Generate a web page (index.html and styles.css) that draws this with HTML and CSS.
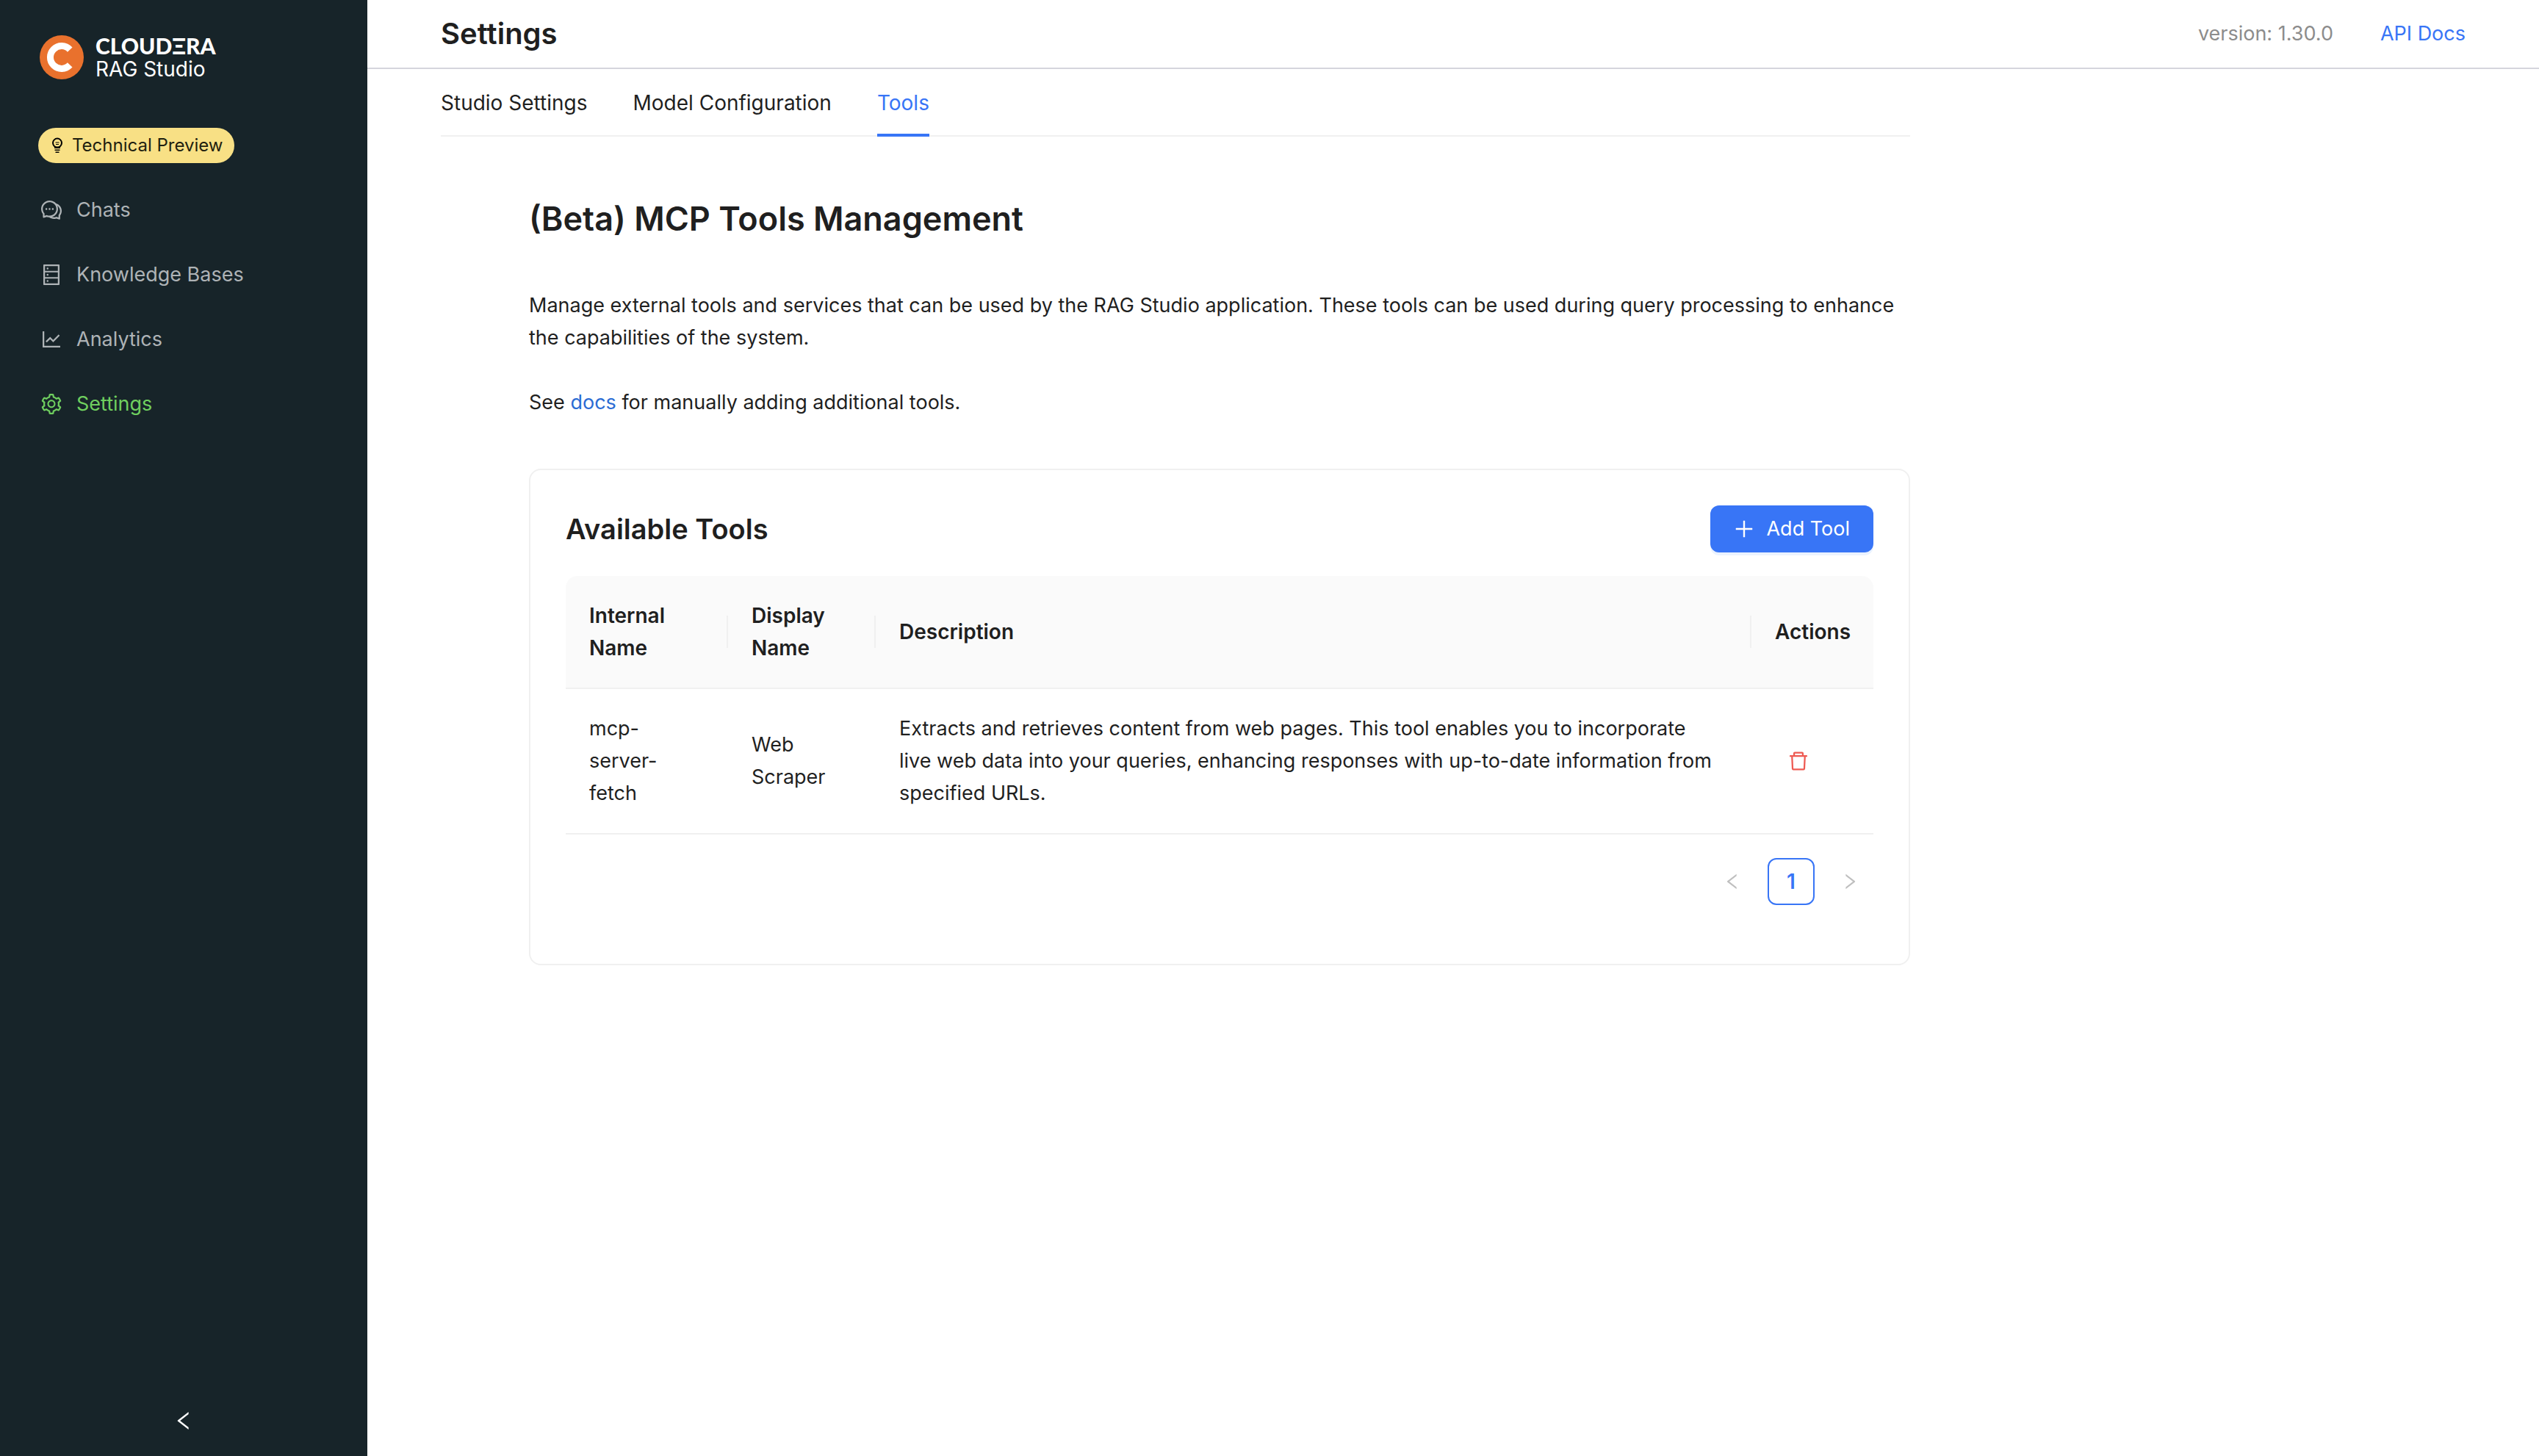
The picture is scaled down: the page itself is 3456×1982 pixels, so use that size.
FILE: index.html
```html
<!DOCTYPE html>
<html lang="en">
<head>
<meta charset="utf-8">
<meta name="viewport" content="width=device-width, initial-scale=1">
<title>RAG Studio - Settings</title>
<link rel="stylesheet" href="styles.css">
</head>
<body>
<div class="app">
  <aside class="sidebar">
    <a class="brand" href="#" aria-label="Cloudera RAG Studio">
      <svg class="brand-mark" viewBox="0 0 60 60" aria-hidden="true">
        <circle cx="30" cy="30" r="30" fill="#e9712d"/>
        <path d="M41.2 19.6A15.4 15.4 0 1 0 41.2 40.4" fill="none" stroke="#fff" stroke-width="9"/>
      </svg>
      <span class="brand-text">
        <span class="brand-name">CLOUDΞRA</span>
        <span class="brand-product">RAG Studio</span>
      </span>
    </a>
    <span class="tag">
      <svg class="tag-icon" viewBox="0 0 24 24" aria-hidden="true">
        <circle cx="12" cy="8.600" r="6" fill="none" stroke="currentColor" stroke-width="2"/>
        <path d="M9.500 8h5M10 10.500h4" fill="none" stroke="currentColor" stroke-width="1"/>
        <path d="M8 14h8v2H8zM8.500 17.500h7v1.600h-7zM9.500 20.500h5v1.500h-5z" fill="currentColor"/>
      </svg>
      Technical Preview
    </span>
    <nav class="menu" aria-label="Main">
      <a class="menu-item" href="#">
        <svg class="icon" viewBox="64 64 896 896" aria-hidden="true"><path d="M573 421c-23.1 0-41 17.900-41 40s17.900 40 41 40c21.100 0 39-17.900 39-40s-17.900-40-39-40zm-280 0c-23.100 0-41 17.900-41 40s17.900 40 41 40c21.100 0 39-17.900 39-40s-17.900-40-39-40z"/><path d="M894 345a343.920 343.920 0 00-189-130v.1c-17.100-19-36.400-36.500-58-52.100-163.700-119-393.500-82.700-513 81-96.300 133-92.200 311.900 6 439l.8 132.600c0 3.200.5 6.400 1.500 9.400a31.950 31.950 0 0040.100 20.900L309 806c33.500 11.900 68.100 18.700 102.500 20.600l-.5.4c89.100 64.900 205.900 84.400 313 49l127.100 41.400c3.200 1 6.500 1.600 9.900 1.600 17.700 0 32-14.300 32-32V753c88.100-119.600 90.400-284.900 1-408zM323 735l-12-5-99 31-1-104-8-9c-84.600-103.200-90.200-251.900-11-361 96.400-132.200 281.200-161.400 413-66 132.200 96.100 161.500 280.600 66 412-80.100 109.900-223.500 150.500-348 102zm505-17l-8 10 1 104-98-33-12 5c-56 20.800-115.700 22.500-171 7l-.2-.1A367.310 367.310 0 00729 676c76.400-105.300 88.800-237.600 44.400-350.400l.6.4c23 16.500 44.100 37.100 62 62 72.600 99.600 68.500 235.200-8 330z"/><path d="M433 421c-23.100 0-41 17.900-41 40s17.900 40 41 40c21.100 0 39-17.900 39-40s-17.900-40-39-40z"/></svg>
        Chats
      </a>
      <a class="menu-item" href="#">
        <svg class="icon" viewBox="64 64 896 896" aria-hidden="true"><path d="M832 64H192c-17.700 0-32 14.300-32 32v832c0 17.700 14.300 32 32 32h640c17.700 0 32-14.300 32-32V96c0-17.700-14.300-32-32-32zm-600 72h560v208H232V136zm560 480H232V408h560v208zm0 272H232V680h560v208zM304 240a40 40 0 1080 0 40 40 0 10-80 0zm0 272a40 40 0 1080 0 40 40 0 10-80 0zm0 272a40 40 0 1080 0 40 40 0 10-80 0z"/></svg>
        Knowledge Bases
      </a>
      <a class="menu-item" href="#">
        <svg class="icon" viewBox="64 64 896 896" aria-hidden="true"><path d="M888 792H200V168c0-4.400-3.600-8-8-8h-56c-4.400 0-8 3.600-8 8v688c0 4.400 3.600 8 8 8h752c4.400 0 8-3.600 8-8v-56c0-4.400-3.600-8-8-8zM305.800 637.700c3.100 3.100 8.100 3.100 11.300 0l138.300-137.600L583 628.500c3.100 3.100 8.200 3.100 11.300 0l275.400-275.300c3.100-3.100 3.100-8.200 0-11.300l-39.600-39.600a8.030 8.030 0 00-11.300 0l-230 229.900L461.400 404a8.030 8.030 0 00-11.300 0L266.300 586.700a8.030 8.030 0 000 11.300l39.500 39.700z"/></svg>
        Analytics
      </a>
      <a class="menu-item menu-item-active" href="#" aria-current="page">
        <svg class="icon" viewBox="64 64 896 896" aria-hidden="true"><path d="M924.800 625.700l-65.500-56c3.100-19 4.700-38.400 4.700-57.800s-1.600-38.800-4.700-57.800l65.500-56a32.030 32.030 0 009.300-35.200l-.9-2.600a443.740 443.740 0 00-79.700-137.900l-1.800-2.100a32.120 32.120 0 00-35.100-9.500l-81.300 28.900c-30-24.600-63.500-44-99.700-57.600l-15.700-85a32.050 32.050 0 00-25.800-25.700l-2.700-.5c-52.100-9.400-106.900-9.400-159 0l-2.700.5a32.050 32.050 0 00-25.800 25.700l-15.800 85.400a351.860 351.860 0 00-99 57.400l-81.900-29.100a32 32 0 00-35.100 9.500l-1.800 2.100a446.020 446.020 0 00-79.700 137.900l-.9 2.600c-4.500 12.500-.8 26.500 9.300 35.200l66.300 56.600c-3.100 18.800-4.600 38-4.600 57.100 0 19.200 1.500 38.400 4.600 57.100L99 625.500a32.030 32.030 0 00-9.300 35.200l.9 2.600c18.100 50.400 44.900 96.900 79.700 137.900l1.800 2.100a32.120 32.120 0 0035.100 9.500l81.900-29.100c29.800 24.500 63.100 43.900 99 57.400l15.800 85.400a32.050 32.050 0 0025.800 25.700l2.700.5a449.400 449.400 0 00159 0l2.700-.5a32.050 32.050 0 0025.800-25.700l15.700-85a350 350 0 0099.700-57.600l81.300 28.900a32 32 0 0035.100-9.500l1.800-2.100c34.800-41.100 61.600-87.500 79.700-137.900l.9-2.600c4.500-12.300.8-26.300-9.300-35zM788.300 465.900c2.500 15.100 3.800 30.600 3.800 46.100s-1.300 31-3.800 46.100l-6.600 40.100 74.700 63.900a370.030 370.030 0 01-42.600 73.600L721 702.800l-31.400 25.800c-23.900 19.600-50.500 35-79.300 45.800l-38.100 14.300-17.900 97a377.500 377.500 0 01-85 0l-17.900-97.200-37.800-14.500c-28.500-10.800-55-26.200-78.700-45.700l-31.400-25.900-93.400 33.200c-17-22.900-31.200-47.600-42.600-73.600l75.500-64.500-6.500-40c-2.400-14.900-3.700-30.300-3.700-45.500 0-15.300 1.200-30.600 3.700-45.500l6.500-40-75.500-64.500c11.300-26.100 25.600-50.700 42.600-73.600l93.400 33.200 31.400-25.900c23.700-19.500 50.200-34.900 78.700-45.700l37.900-14.300 17.900-97.200c28.100-3.200 56.800-3.200 85 0l17.900 97 38.100 14.300c28.700 10.800 55.400 26.200 79.300 45.800l31.400 25.800 92.800-32.900c17 22.900 31.200 47.600 42.600 73.600L781.800 426l6.500 39.900zM512 326c-97.200 0-176 78.800-176 176s78.800 176 176 176 176-78.800 176-176-78.800-176-176-176zm79.200 255.200A111.600 111.600 0 01512 614c-29.900 0-58-11.700-79.200-32.800A111.600 111.600 0 01400 502c0-29.900 11.700-58 32.800-79.200C454 401.600 482.100 390 512 390c29.900 0 58 11.600 79.200 32.800A111.600 111.600 0 01624 502c0 29.900-11.700 58-32.800 79.200z"/></svg>
        Settings
      </a>
    </nav>
    <button class="collapse" type="button" aria-label="Collapse sidebar">
      <svg class="icon" viewBox="64 64 896 896" aria-hidden="true"><path d="M724 218.300V141c0-6.700-7.700-10.400-12.900-6.300L260.300 486.800a31.860 31.860 0 000 50.300l450.800 352.100c5.300 4.100 12.900.4 12.900-6.300v-77.300c0-4.900-2.300-9.600-6.100-12.600l-360-281 360-281.100c3.800-3 6.100-7.700 6.100-12.600z"/></svg>
    </button>
  </aside>

  <div class="page">
    <header class="topbar">
      <h1 class="topbar-title">Settings</h1>
      <div class="topbar-meta">
        <span class="version">version: 1.30.0</span>
        <a class="link" href="#">API Docs</a>
      </div>
    </header>

    <main class="content">
      <nav class="tabs" aria-label="Settings sections">
        <a class="tab" href="#">Studio Settings</a>
        <a class="tab" href="#">Model Configuration</a>
        <a class="tab tab-active" href="#" aria-current="page">Tools</a>
      </nav>

      <section class="panel">
        <h2 class="panel-title">(Beta) MCP Tools Management</h2>
        <p class="text">Manage external tools and services that can be used by the RAG Studio application. These tools can be used during query processing to enhance the capabilities of the system.</p>
        <p class="text">See <a class="doc-link" href="#">docs</a> for manually adding additional tools.</p>

        <div class="card">
          <div class="card-head">
            <h3 class="card-title">Available Tools</h3>
            <button class="add-button" type="button">
              <svg class="icon" viewBox="64 64 896 896" aria-hidden="true"><path d="M482 152h60q8 0 8 8v704q0 8-8 8h-60q-8 0-8-8V160q0-8 8-8z"/><path d="M160 474h704q8 0 8 8v60q0 8-8 8H160q-8 0-8-8v-60q0-8 8-8z"/></svg>
              Add Tool
            </button>
          </div>

          <table class="tools">
            <colgroup>
              <col class="col-internal">
              <col class="col-display">
              <col>
              <col class="col-actions">
            </colgroup>
            <thead>
              <tr>
                <th scope="col">Internal Name</th>
                <th scope="col">Display Name</th>
                <th scope="col">Description</th>
                <th scope="col">Actions</th>
              </tr>
            </thead>
            <tbody>
              <tr>
                <td>mcp-server-fetch</td>
                <td>Web Scraper</td>
                <td class="description">Extracts and retrieves content from web pages. This tool enables you to incorporate live web data into your queries, enhancing responses with up-to-date information from specified URLs.</td>
                <td>
                  <button class="icon-button" type="button" aria-label="Delete tool">
                    <svg class="icon" viewBox="64 64 896 896" aria-hidden="true"><path d="M360 184h-8c4.400 0 8-3.600 8-8v8h304v-8c0 4.400 3.600 8 8 8h-8v72h72v-80c0-35.300-28.700-64-64-64H352c-35.300 0-64 28.700-64 64v80h72v-72zm504 72H160c-17.700 0-32 14.300-32 32v32c0 4.400 3.600 8 8 8h60.400l24.700 523c1.600 34.100 29.800 61 63.900 61h454c34.200 0 62.300-26.800 63.900-61l24.700-523H888c4.400 0 8-3.600 8-8v-32c0-17.700-14.300-32-32-32zM731.300 840H292.700l-24.200-512h487l-24.200 512z"/></svg>
                  </button>
                </td>
              </tr>
            </tbody>
          </table>

          <nav class="pagination" aria-label="Pages">
            <button class="page-arrow" type="button" aria-label="Previous page" disabled>
              <svg class="icon-small" viewBox="64 64 896 896" aria-hidden="true"><path d="M724 218.300V141c0-6.700-7.700-10.400-12.900-6.300L260.300 486.800a31.860 31.860 0 000 50.300l450.800 352.100c5.300 4.100 12.900.4 12.900-6.300v-77.300c0-4.900-2.300-9.600-6.100-12.600l-360-281 360-281.100c3.800-3 6.100-7.700 6.100-12.600z"/></svg>
            </button>
            <button class="page-number" type="button" aria-current="page">1</button>
            <button class="page-arrow" type="button" aria-label="Next page" disabled>
              <svg class="icon-small" viewBox="64 64 896 896" aria-hidden="true"><path d="M765.700 486.800L314.900 134.700A7.970 7.970 0 00302 141v77.300c0 4.900 2.300 9.600 6.100 12.600l360 281.100-360 281.100c-3.900 3-6.100 7.700-6.100 12.600V883c0 6.700 7.700 10.400 12.900 6.300l450.800-352.100a31.960 31.960 0 000-50.400z"/></svg>
            </button>
          </nav>
        </div>
      </section>
    </main>
  </div>
</div>
</body>
</html>
```
FILE: styles.css
```css
* {
  box-sizing: border-box;
}

body {
  margin: 0;
  background: #fff;
  color: #1f1f1f;
  font-family: Inter, "Liberation Sans", sans-serif;
  font-size: 27px;
  line-height: 44px;
}

h1, h2, h3, p {
  margin: 0;
}

a {
  text-decoration: none;
}

button {
  margin: 0;
  padding: 0;
  border: 0;
  background: none;
  font: inherit;
  cursor: pointer;
}

.icon {
  flex: none;
  width: 28px;
  height: 28px;
  fill: currentColor;
}

.icon-small {
  width: 24px;
  height: 24px;
  fill: currentColor;
}

.app {
  display: flex;
  min-height: 100vh;
}

/* Sidebar */
.sidebar {
  display: flex;
  flex: none;
  flex-direction: column;
  align-items: flex-start;
  width: 500px;
  padding-top: 48px;
  background: #172429;
}

.brand {
  display: flex;
  gap: 16px;
  margin-left: 54px;
  color: #fff;
}

.brand-mark {
  width: 60px;
  height: 60px;
}

.brand-text {
  display: flex;
  flex-direction: column;
}

.brand-name {
  font: 900 30px/28px Lato, sans-serif;
}

.brand-product {
  font-size: 28px;
  line-height: 36px;
}

.tag {
  display: flex;
  align-items: center;
  gap: 8px;
  height: 48px;
  margin: 62px 0 24px 52px;
  padding: 0 16px 0 14px;
  border-radius: 24px;
  background: #f8e085;
  color: #1f1f10;
  font-size: 24px;
}

.tag-icon {
  width: 24px;
  height: 24px;
  color: #000;
}

.menu {
  display: flex;
  flex-direction: column;
  gap: 8px;
  width: 100%;
}

.menu-item {
  display: flex;
  align-items: center;
  gap: 20px;
  height: 80px;
  padding: 0 56px;
  color: #aeb3b6;
}

.menu-item-active {
  color: #6fcf5f;
}

.collapse {
  display: flex;
  align-items: center;
  justify-content: center;
  width: 100%;
  height: 96px;
  margin-top: auto;
  color: #fff;
}

/* Page */
.page {
  flex: 1;
  min-width: 0;
}

.topbar {
  display: flex;
  align-items: center;
  justify-content: space-between;
  padding: 24px 100px;
  border-bottom: 2px solid #d5d5dd;
}

.topbar-title {
  font-size: 40px;
  font-weight: 600;
  line-height: 44px;
}

.card-title {
  font-size: 38px;
  font-weight: 600;
  line-height: 44px;
}

.topbar-meta {
  display: flex;
  gap: 64px;
}

.version {
  color: #8c8c8c;
}

.link {
  color: #3875f6;
}

.content {
  max-width: 2100px;
  padding-left: 100px;
}

.tabs {
  display: flex;
  gap: 62px;
  box-shadow: inset 0 -2px #f0f0f0;
  font-size: 28px;
}

.tab {
  padding: 24px 0;
  color: #1f1f1f;
}

.tab-active {
  box-shadow: inset 0 -4px #3875f6;
  color: #3875f6;
}

.panel {
  display: flex;
  flex-direction: column;
  gap: 44px;
  padding: 80px 0 0 120px;
}

.panel-title {
  margin-bottom: 20px;
  font-size: 45px;
  font-weight: 600;
  line-height: 64px;
}

.doc-link {
  color: #2b6cd4;
}

.card {
  margin-top: 24px;
  padding: 48px;
  border: 2px solid #f0f0f0;
  border-radius: 16px;
}

.card-head {
  display: flex;
  align-items: center;
  justify-content: space-between;
  margin-bottom: 32px;
}

.add-button {
  display: flex;
  align-items: center;
  gap: 16px;
  height: 64px;
  padding: 0 32px;
  border-radius: 12px;
  background: #3875f6;
  box-shadow: 0 4px 0 #ebf3ff;
  color: #fff;
}

/* Tools table */
.tools {
  width: 100%;
  border-collapse: separate;
  border-spacing: 0;
  table-layout: fixed;
}

.col-internal {
  width: 221px;
}

.col-display {
  width: 201px;
}

.col-actions {
  width: 166px;
}

.tools th,
.tools td {
  padding: 32px;
  border-bottom: 2px solid #f0f0f0;
  text-align: left;
  vertical-align: middle;
}

.tools .description {
  padding-right: 44px;
}

.tools th {
  background: linear-gradient(#f0f0f0, #f0f0f0) right center / 2px 44px no-repeat #fafafa;
  font-size: 28px;
  font-weight: 600;
}

.tools th:first-child {
  border-top-left-radius: 16px;
}

.tools th:last-child {
  border-top-right-radius: 16px;
  background: #fafafa;
}

.icon-button {
  display: flex;
  align-items: center;
  justify-content: center;
  width: 64px;
  height: 64px;
  color: #ee5a52;
}

.pagination {
  display: flex;
  justify-content: flex-end;
  gap: 16px;
  margin: 32px 0;
}

.page-arrow,
.page-number {
  display: flex;
  align-items: center;
  justify-content: center;
  width: 64px;
  height: 64px;
}

.page-arrow {
  color: #bfbfbf;
  cursor: default;
}

.page-number {
  border: 2px solid #3875f6;
  border-radius: 12px;
  color: #3875f6;
  font-size: 28px;
  font-weight: 600;
}
```
